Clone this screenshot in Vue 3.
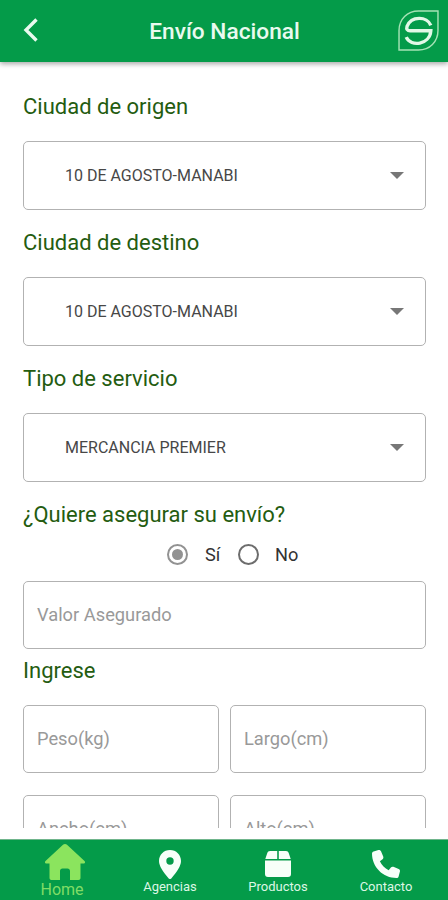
<script setup>
import { ref } from 'vue'

const selects = [
  { label: 'Ciudad de origen', value: '10 DE AGOSTO-MANABI', kind: 'origin' },
  { label: 'Ciudad de destino', value: '10 DE AGOSTO-MANABI', kind: 'destination' },
  { label: 'Tipo de servicio', value: 'MERCANCIA PREMIER', kind: 'service' },
]
const measures = ['Peso(kg)', 'Largo(cm)', 'Ancho(cm)', 'Alto(cm)']
const insured = ref(true)
</script>

<template>
  <div class="screen">
    <header class="bar">
      <svg class="back" viewBox="0 0 16 26"><path d="M13.500 2.500 3 13l10.500 10.500" /></svg>
      <h1>Envío Nacional</h1>
      <svg class="logo" viewBox="0 0 40 40">
        <path class="leaf" d="M39 1H20C9 1 1 9 1 20v19h19c11 0 19-8 19-19Z" />
        <path class="ess" d="M32 15C28.500 6 13 5.500 8.800 16c-.8 2.600.3 4.300 3 4.300H32C31 34 12.500 36.500 8 26.500" />
      </svg>
    </header>

    <main class="form">
      <section v-for="s in selects" :key="s.kind" class="group">
        <h2>{{ s.label }}</h2>
        <div class="box select">
          <span>{{ s.value }}</span>
          <svg class="caret" viewBox="0 0 14 7"><path d="M0 0h14L7 7Z" /></svg>
        </div>
      </section>

      <h2>¿Quiere asegurar su envío?</h2>
      <div class="radios">
        <span class="radio on" @click="insured = true"><i v-if="insured"></i></span>
        <span class="yes">Sí</span>
        <span class="radio" @click="insured = false"><i v-if="!insured"></i></span>
        <span class="no">No</span>
      </div>
      <div class="box input"><span>Valor Asegurado</span></div>

      <h2 class="enter">Ingrese</h2>
      <div class="grid">
        <div v-for="m in measures" :key="m" class="box input"><span>{{ m }}</span></div>
      </div>
    </main>

    <nav class="tabs">
      <a class="tab active">
        <svg class="home" viewBox="0 0 40 36"><path d="M20 0c.8 0 1.500.3 2 .8L39.500 17c1 1 .6 2.500-1 2.500H35.500V34c0 1.200-.8 2-2 2H25V27c0-1.500-1-2.500-2.500-2.500h-5C16 24.500 15 25.500 15 27v9H6.500c-1.200 0-2-.8-2-2V19.500H1.500c-1.600 0-2-1.500-1-2.500L18 .8c.5-.5 1.200-.8 2-.8Z" /></svg>
        <span>Home</span>
      </a>
      <a class="tab">
        <svg class="pin" viewBox="0 0 22 29"><path fill-rule="evenodd" d="M11 0C4.800 0 0 4.800 0 11c0 5 4 10.500 9.500 17.300.9 1 2.100 1 3 0C18 21.500 22 16 22 11 22 4.800 17.200 0 11 0Zm0 7.300a3.700 3.700 0 1 1 0 7.400 3.700 3.700 0 0 1 0-7.400Z" /></svg>
        <span>Agencias</span>
      </a>
      <a class="tab">
        <svg class="package" viewBox="0 0 26 26"><path d="M5 0h7.200v8H.3L2.300 2C2.700.7 3.600 0 5 0ZM13.800 0H21c1.400 0 2.300.7 2.700 2l2 6H13.800ZM0 9.500h26V23c0 2-1 3-3 3H3c-2 0-3-1-3-3Z" /></svg>
        <span>Productos</span>
      </a>
      <a class="tab">
        <svg class="phone" viewBox="0 0 512 512"><path d="M164.900 24.600c-7.700-18.600-28-28.500-47.400-23.200l-88 24C12.100 30.200 0 46 0 64c0 247.400 200.600 448 448 448 18 0 33.800-12.100 38.600-29.500l24-88c5.300-19.400-4.600-39.700-23.200-47.400l-96-40c-16.300-6.800-35.200-2.100-46.300 11.600L304.700 368C234.300 334.700 177.300 277.700 144 207.300L193.300 167c13.700-11.200 18.400-30 11.600-46.300l-40-96Z" /></svg>
        <span>Contacto</span>
      </a>
    </nav>
  </div>
</template>

<style>
body { margin: 0; }
</style>

<style scoped>
* { box-sizing: border-box; }
.screen {
  width: 448px; height: 900px; display: flex; flex-direction: column;
  background: #fff; overflow: hidden; font-family: Roboto, sans-serif;
}
.bar {
  height: 62px; flex: none; display: flex; align-items: center; justify-content: space-between;
  padding: 0 9px 2px 23px; background: #049b49; box-shadow: 0 2px 5px rgba(0, 0, 0, .35);
}
.back { width: 16px; height: 26px; fill: none; stroke: #e9faef; stroke-width: 3.4; }
h1 { margin: 0 0 0 12px; padding-top: 3px; font-size: 22.700px; line-height: 28px; font-weight: 500; color: #e9faef; white-space: nowrap; }
.logo { width: 41px; height: 41px; fill: none; }
.leaf { stroke: #a5e3b5; stroke-width: 1.4; }
.ess { stroke: #e2f8e7; stroke-width: 3.3; }
.form { height: 766px; flex: none; padding: 32px 22px 0 23px; overflow: hidden; }
.group { margin-bottom: 20px; }
h2 { margin: 0; height: 24px; line-height: 26px; font-size: 22px; font-weight: 400; color: #245c10; white-space: nowrap; }
.box { display: flex; align-items: center; border: 1.500px solid #b2b2b2; border-radius: 5px; background: #fff; }
.select { height: 69px; margin-top: 23px; padding: 0 21px 0 41px; justify-content: space-between; font-size: 16px; color: #474747; }
.caret { width: 14px; height: 7px; fill: #777; }
.radios { display: flex; align-items: center; height: 32px; margin: 12px 0 11px 144px; font-size: 18.200px; color: #333; }
.radio { width: 21px; height: 21px; border: 2px solid #6d6d6d; border-radius: 50%; display: grid; place-items: center; }
.radio.on { border-color: #929292; }
.radio i { width: 11px; height: 11px; border-radius: 50%; background: #929292; }
.yes { width: 33px; margin-left: 17px; }
.no { margin-left: 16px; }
.input { height: 68px; padding: 0 0 2px 13px; font-size: 18.300px; color: #999; }
.enter { margin: 9px 0 23px; }
.grid { display: grid; grid-template-columns: 1fr 1fr; gap: 22px 11px; }
.tabs {
  height: 61px; flex: none; margin-top: 11px; display: grid; grid-template-columns: repeat(4, 1fr);
  padding: 0 8px; background: #049b49; border-top: 1px solid #70b58c;
}
.tab { display: flex; flex-direction: column; align-items: center; fill: #f7fff9; color: #ddf7e5; font-size: 13px; line-height: 16px; padding-top: 10px; }
.active { fill: #8be45e; color: #80dd66; font-size: 16px; line-height: 20px; padding-top: 4px; }
.home { width: 40px; height: 36px; margin-left: 5px; }
.pin { width: 22px; height: 29px; }
.package { width: 26px; height: 26px; margin: 1px 0 2px; }
.phone { width: 28px; height: 28px; margin-bottom: 1px; }
</style>
